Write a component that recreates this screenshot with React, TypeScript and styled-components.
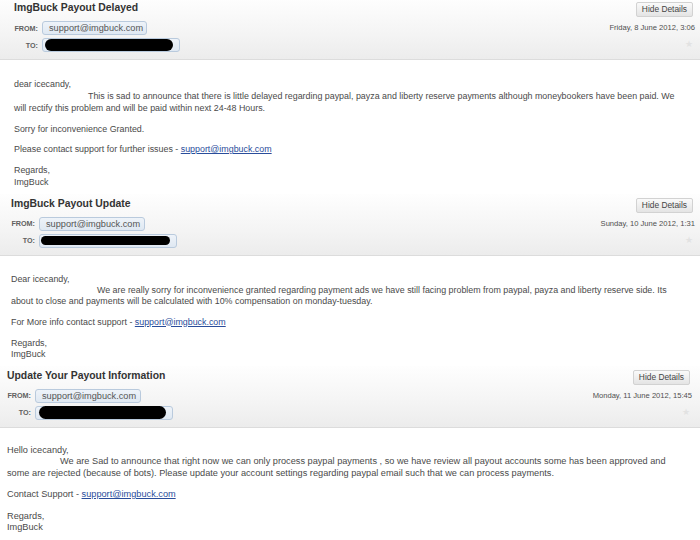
import styled, { createGlobalStyle } from "styled-components";
import React from "react";

const GlobalStyle = createGlobalStyle`
  body {
    margin: 0;
    background: #ffffff;
    font-family: "Liberation Sans", Arial, sans-serif;
    overflow: hidden;
  }
`;

const Page = styled.div`
  width: 700px;
  margin-top: -2px;
`;

const Message = styled.section`
  width: 100%;
`;

const Header = styled.header<{ $left: number; $right: number }>`
  display: flex;
  justify-content: space-between;
  align-items: flex-start;
  height: 62px;
  box-sizing: border-box;
  padding: 3px ${(p) => p.$right}px 0 ${(p) => p.$left}px;
  background: linear-gradient(to bottom, #fefefe 0%, #f4f4f4 60%, #ececec 100%);
  border-bottom: 1px solid #dcdcdc;
`;

const Meta = styled.div`
  display: flex;
  flex-direction: column;
`;

const Title = styled.h2`
  margin: 0;
  font-size: 10.4px;
  line-height: 14px;
  font-weight: bold;
  color: #333333;
`;

const AddressRow = styled.div<{ $first?: boolean }>`
  display: flex;
  align-items: center;
  margin-top: ${(p) => (p.$first ? 6 : 3)}px;
`;

const Label = styled.span`
  width: 24px;
  margin-right: 4px;
  text-align: right;
  font-size: 7.2px;
  font-weight: bold;
  color: #606060;
`;

const Chip = styled.span<{ $width: number }>`
  display: flex;
  align-items: center;
  box-sizing: border-box;
  width: ${(p) => p.$width}px;
  height: 14px;
  padding: 0 6px;
  background: linear-gradient(to bottom, #eef3f9, #dfe8f2);
  border: 1px solid #b9cadd;
  border-radius: 3px;
  font-size: 9.2px;
  color: #555555;
`;

const Redacted = styled.span<{ $h: number; $w: number; $shift: number }>`
  display: block;
  width: ${(p) => p.$w}px;
  height: ${(p) => p.$h}px;
  margin-left: ${(p) => p.$shift}px;
  background: #000000;
  border-radius: 7px;
`;

const Side = styled.div`
  display: flex;
  flex-direction: column;
  align-items: flex-end;
  margin-top: 1px;
`;

const HideButton = styled.button`
  height: 15px;
  padding: 0 5px;
  background: linear-gradient(to bottom, #fafafa, #e4e4e4);
  border: 1px solid #d2d2d2;
  border-radius: 2px;
  font-family: "Liberation Sans", Arial, sans-serif;
  font-size: 8.4px;
  color: #444444;
  line-height: 13px;
  cursor: pointer;
`;

const DateText = styled.span`
  margin-top: 6px;
  margin-right: -2px;
  font-size: 7.6px;
  line-height: 10px;
  color: #4f4f4f;
`;

const Star = styled.span`
  margin-top: 6px;
  font-size: 9px;
  line-height: 10px;
  color: #e2e2e2;
`;

const Body = styled.div<{
  $left: number;
  $lh: number;
  $gap: number;
  $top: number;
  $bottom: number;
  $size: number;
}>`
  padding: ${(p) => p.$top}px 0 ${(p) => p.$bottom}px ${(p) => p.$left}px;
  font-size: ${(p) => p.$size}px;
  line-height: ${(p) => p.$lh}px;
  color: #4a4a4a;
  white-space: nowrap;

  p {
    margin: 0 0 ${(p) => p.$gap}px;
  }
  p:last-child {
    margin-bottom: 0;
  }
`;

const Indent = styled.span<{ $w: number }>`
  display: inline-block;
  width: ${(p) => p.$w}px;
`;

const Link = styled.a`
  color: #2a4d9b;
  text-decoration: underline;
`;

type Mail = {
  title: string;
  date: string;
  left: number;
  right: number;
  fromWidth: number;
  redact: { h: number; w: number; shift: number };
  size: number;
  lh: number;
  gap: number;
  top: number;
  bottom: number;
  indent: number;
  greeting: string;
  lines: [string, string];
  extra?: string;
  contact: string;
};

const mails: Mail[] = [
  {
    title: "ImgBuck Payout Delayed",
    date: "Friday, 8 June 2012, 3:06",
    left: 14,
    right: 7,
    fromWidth: 105,
    redact: { h: 12, w: 136, shift: -4 },
    size: 8.9,
    lh: 12,
    gap: 8.5,
    top: 18,
    bottom: 6,
    indent: 74,
    greeting: "dear icecandy,",
    lines: [
      "This is sad to announce that there is little delayed regarding paypal, payza and liberty reserve payments although moneybookers have been paid. We",
      "will rectify this problem and will be paid within next 24-48 Hours.",
    ],
    extra: "Sorry for inconvenience Granted.",
    contact: "Please contact support for further issues - ",
  },
  {
    title: "ImgBuck Payout Update",
    date: "Sunday, 10 June 2012, 1:31",
    left: 11,
    right: 7,
    fromWidth: 106,
    redact: { h: 9, w: 135, shift: -5 },
    size: 8.9,
    lh: 11,
    gap: 10,
    top: 18,
    bottom: 6,
    indent: 86,
    greeting: "Dear icecandy,",
    lines: [
      "We are really sorry for inconvenience granted regarding payment ads we have still facing problem from paypal, payza and liberty reserve side. Its",
      "about to close and payments will be calculated with 10% compensation on monday-tuesday.",
    ],
    contact: "For More info contact support - ",
  },
  {
    title: "Update Your Payout Information",
    date: "Monday, 11 June 2012, 15:45",
    left: 7,
    right: 10,
    fromWidth: 106,
    redact: { h: 13, w: 132, shift: -3 },
    size: 9.2,
    lh: 11.5,
    gap: 10,
    top: 17,
    bottom: 5,
    indent: 53,
    greeting: "Hello icecandy,",
    lines: [
      "We are Sad to announce that right now we can only process paypal payments , so we have review all payout accounts some has been approved and",
      "some are rejected (because of bots). Please update your account settings regarding paypal email such that we can process payments.",
    ],
    contact: "Contact Support - ",
  },
];

const MailView = ({ mail }: { mail: Mail }) => (
  <Message>
    <Header $left={mail.left} $right={mail.right}>
      <Meta>
        <Title>{mail.title}</Title>
        <AddressRow $first>
          <Label>FROM:</Label>
          <Chip $width={mail.fromWidth}>support@imgbuck.com</Chip>
        </AddressRow>
        <AddressRow>
          <Label>TO:</Label>
          <Chip $width={138}>
            <Redacted $h={mail.redact.h} $w={mail.redact.w} $shift={mail.redact.shift} />
          </Chip>
        </AddressRow>
      </Meta>
      <Side>
        <HideButton type="button">Hide Details</HideButton>
        <DateText>{mail.date}</DateText>
        <Star>★</Star>
      </Side>
    </Header>
    <Body
      $left={mail.left}
      $lh={mail.lh}
      $gap={mail.gap}
      $top={mail.top}
      $bottom={mail.bottom}
      $size={mail.size}
    >
      <p>
        {mail.greeting}
        <br />
        <Indent $w={mail.indent} />
        {mail.lines[0]}
        <br />
        {mail.lines[1]}
      </p>
      {mail.extra && <p>{mail.extra}</p>}
      <p>
        {mail.contact}
        <Link href="#">support@imgbuck.com</Link>
      </p>
      <p>
        Regards,
        <br />
        ImgBuck
      </p>
    </Body>
  </Message>
);

const App = () => (
  <>
    <GlobalStyle />
    <Page>
      {mails.map((m) => (
        <MailView key={m.title} mail={m} />
      ))}
    </Page>
  </>
);

export default App;
